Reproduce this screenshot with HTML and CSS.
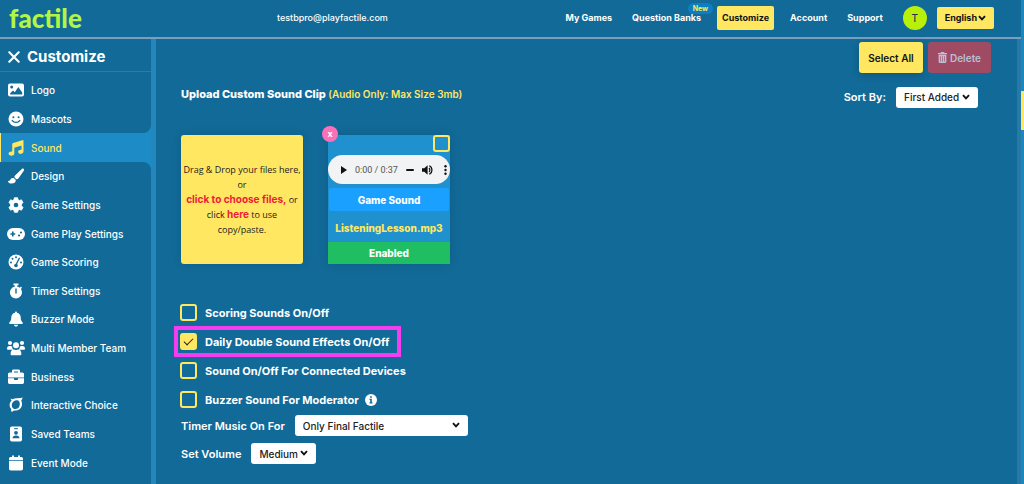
FILE: index.html
```html
<!DOCTYPE html>
<html lang="en">
<head>
<meta charset="utf-8">
<meta name="viewport" content="width=device-width, initial-scale=1">
<title>Factile – Customize Sound</title>
<link rel="stylesheet" href="styles.css">
</head>
<body>
<svg class="defs" aria-hidden="true">
  <symbol id="chevron" viewBox="0 0 8 6"><path d="M1 1.2 4 4.3 7 1.2" fill="none" stroke="currentColor" stroke-width="1.9"/></symbol>
</svg>
<div class="page">
  <div class="app">
    <header class="topbar">
      <a class="brand" href="#">factile</a>
      <span class="email">testbpro@playfactile.com</span>
      <nav class="topnav">
        <a href="#">My Games</a>
        <a class="banks" href="#">Question Banks<span class="new">New</span></a>
        <a class="current" href="#">Customize</a>
        <a href="#">Account</a>
        <a href="#">Support</a>
      </nav>
      <button class="avatar" type="button">T</button>
      <button class="language" type="button">English<svg class="chevron"><use href="#chevron"/></svg></button>
    </header>
    <div class="body">
      <aside class="sidebar">
        <div class="side-head">
          <button class="close" type="button" aria-label="Close menu"><svg viewBox="0 0 12 12"><path d="M1.3 1.3 10.7 10.7M10.7 1.3 1.3 10.7" stroke="currentColor" stroke-width="2.1" stroke-linecap="round"/></svg></button>
          <h1>Customize</h1>
        </div>
        <ul class="menu">
          <li><a href="#"><svg viewBox="0 0 18 16"><rect x="1" y="1.5" width="16" height="13" rx="2"/><circle class="cut" cx="4.7" cy="5" r="1.5"/><path class="cut" d="M3.2 12.5v-1.3L6 8.5l1.8 1.7L11.3 5l3.9 5.5v2z"/></svg>Logo</a></li>
          <li class="before"><a href="#"><svg viewBox="0 0 18 16"><circle cx="9" cy="8" r="7.5"/><circle class="cut" cx="6.4" cy="6.3" r="1"/><circle class="cut" cx="11.6" cy="6.3" r="1"/><path class="cut-line" d="M5.3 9.6c1.8 2.4 5.6 2.4 7.4 0"/></svg>Mascots</a></li>
          <li class="active"><a href="#" aria-current="page"><svg viewBox="0 0 18 16"><path d="M16.5.7v10.9c0 1.3-1.3 2.3-2.8 2.3s-2.6-.9-2.6-2.1 1.2-2.1 2.7-2.1l.7.1V5.5L7.3 7.7v5.7c0 1.300-1.300 2.300-2.900 2.300S1.500 14.800 1.500 13.600s1.300-2.200 2.900-2.200l.8.1V4.200c0-.6.3-1 .9-1.200L15.300.2c.7-.2 1.200 0 1.200.5z"/></svg>Sound</a></li>
          <li class="after"><a href="#"><svg viewBox="0 0 18 16"><path d="M16.500.7c1 .8.500 1.600.1 2.300l-5 7.300c-.6.800-1.400 1.100-2.200.9L7.600 9.600c-.3-.9 0-1.600.7-2.300L14.800.9c.5-.5 1.100-.6 1.700-.2zM6.700 10.100l2.100 1.900c.2 2.300-1.900 3.600-4.100 3.600C2.300 15.600.9 14.500 1 12.700c1.200.7 1.800.1 2.300-.9.700-1.400 1.900-2 3.400-1.700z"/></svg>Design</a></li>
          <li><a href="#"><svg viewBox="0 0 18 16"><path d="M7.400.700h3.200l.5 2.100 1.300.7 2-.7 1.700 2.800-1.600 1.500v1.800l1.600 1.500-1.700 2.800-2-.7-1.300.7-.5 2.100H7.400l-.5-2.100-1.300-.7-2 .7-1.700-2.800 1.600-1.500V7.100L1.900 5.600l1.700-2.800 2 .7 1.300-.7z" stroke="#fff" stroke-width=".8" stroke-linejoin="round"/><circle class="cut" cx="9" cy="8" r="2.300"/></svg>Game Settings</a></li>
          <li><a href="#"><svg viewBox="0 0 18 16"><rect x="0" y="2" width="18" height="12" rx="6"/><path class="cut" d="M5 5.600h1.600v1.600h1.600v1.600H6.600v1.600H5V8.800H3.400V7.200H5z"/><circle class="cut" cx="12" cy="9.500" r="1.100"/><circle class="cut" cx="14" cy="6.500" r="1.100"/></svg>Game Play Settings</a></li>
          <li><a href="#"><svg viewBox="0 0 18 16"><circle cx="9" cy="8" r="7.500"/><circle class="cut" cx="4" cy="8.500" r="1"/><circle class="cut" cx="5.500" cy="4.800" r="1"/><circle class="cut" cx="9" cy="3.300" r="1"/><circle class="cut" cx="14" cy="8.500" r="1"/><path class="cut-line" d="M12.300 4.300 9.400 10"/><circle class="cut" cx="9" cy="11.500" r="1.800"/></svg>Game Scoring</a></li>
          <li><a href="#"><svg viewBox="0 0 18 16"><path d="M6.500.5h5v1.800h-1.300v1.300c1 .2 1.900.6 2.600 1.200L14 3.600 15 4.800l-1.100 1.300a6 6 0 1 1-6.100-2.500V2.300H6.500z"/><path class="cut-line" d="M9 6v4"/></svg>Timer Settings</a></li>
          <li><a href="#"><svg viewBox="0 0 18 16"><path d="M9 .5c.7 0 1 .4 1 1.200 2.400.5 3.700 2.300 3.700 4.600 0 3 .8 4 1.900 5.100.6.700.2 1.600-.7 1.600H3.100c-.9 0-1.300-.9-.7-1.600C3.500 10.300 4.300 9.300 4.300 6.300c0-2.300 1.300-4.100 3.700-4.600 0-.8.3-1.200 1-1.200zM7 13.700h4c0 2.400-4 2.400-4 0z"/></svg>Buzzer Mode</a></li>
          <li><a href="#"><svg viewBox="0 0 18 16"><circle cx="3" cy="3" r="2.100"/><circle cx="15" cy="3" r="2.100"/><circle cx="9" cy="5.300" r="3"/><path d="M0 8.500C0 6.700 1 5.900 2.300 5.900h1.500c.6 0 1 .2 1.400.5-.1 1.300.3 2.400 1.100 3.300H.8c-.5 0-.8-.400-.8-1.200zM18 8.500c0-1.800-1-2.600-2.300-2.600h-1.500c-.6 0-1 .2-1.400.5.1 1.300-.3 2.400-1.100 3.300h5.500c.5 0 .8-.4.8-1.200zM3.600 13.900c0-3 1.400-4.400 3.400-4.400 1.300.6 2.700.6 4 0 2 0 3.400 1.400 3.400 4.400 0 .9-.6 1.400-1.400 1.400H5c-.8 0-1.400-.5-1.400-1.400z"/></svg>Multi Member Team</a></li>
          <li><a href="#"><svg viewBox="0 0 18 16"><path d="M5 3.500V2c0-.8.600-1.400 1.400-1.400h5.200c.8 0 1.400.6 1.400 1.400v1.500h2.200c1 0 1.800.8 1.800 1.800V8.500H1V5.300c0-1 .8-1.800 1.800-1.800zm2 0h4v-1H7zM1 9.300h6v.9c0 .5.300.8.800.8h2.400c.5 0 .8-.3.800-.8v-.9h6v3.900c0 1-.8 1.800-1.800 1.800H2.800c-1 0-1.800-.8-1.800-1.800z"/></svg>Business</a></li>
          <li><a href="#"><svg viewBox="0 0 18 16"><path d="M3.700 1.300c.9 1 1.900 1.100 3.200.5 2.300-.8 4.900-.6 6.800-.8.900-.1 1.400-.3 1.700-.8.100 1.500-.3 2.500-1.200 3.200 2.300 4.800-.3 10-5.400 10-1.700 0-2.900.1-3.700 1.500-.9-.4-1.300-1.300-.8-2.900C1.900 9.400 2.200 5.900 4.600 3.500c-.6-.6-.9-1.300-.9-2.200zM6.800 4.200C4.300 6 4.200 9.800 6.300 11.400c2.100 1.300 4.800.3 5.900-1.700 1.100-2.200.7-4.700-.7-5.900-1.300-.7-3.300-.6-4.700.4z" fill-rule="evenodd"/></svg>Interactive Choice</a></li>
          <li><a href="#"><svg viewBox="0 0 18 16"><rect x="3" y=".5" width="12" height="15" rx="1.800"/><path class="cut" d="M7 2.200h4v1H7z"/><circle class="cut" cx="9" cy="6.800" r="1.900"/><path class="cut" d="M5.600 12.300c0-2 1.100-2.900 3.400-2.900s3.400.9 3.400 2.900z"/></svg>Saved Teams</a></li>
          <li><a href="#"><svg viewBox="0 0 18 16"><path d="M3.800 2H5V.500h2V2h4V.500h2V2h1.200C15.200 2 16 2.700 16 3.700V5H2V3.700C2 2.700 2.800 2 3.800 2zM2 5.800h14v8c0 1-.8 1.700-1.800 1.700H3.800c-1 0-1.800-.7-1.800-1.700z"/></svg>Event Mode</a></li>
        </ul>
      </aside>
      <main class="content">
        <div class="actions">
          <button class="select-all" type="button">Select All</button>
          <button class="delete" type="button" disabled><svg viewBox="0 0 10 12"><path fill="currentColor" fill-rule="evenodd" d="M3.300 0h3.400l.5.900H10v1.500H0V.9h2.800zM.7 3h8.600v7.800c0 .7-.5 1.200-1.200 1.200H1.900c-.7 0-1.200-.5-1.200-1.200zM2.600 4.500v6h.7v-6zm2.100 0v6h.7v-6zm2.100 0v6h.7v-6z"/></svg>Delete</button>
        </div>
        <div class="title-row">
          <h2>Upload Custom Sound Clip <small>(Audio Only: Max Size 3mb)</small></h2>
          <div class="sort">
            <label for="sort">Sort By:</label>
            <span class="select"><select id="sort"><option>First Added</option></select><svg class="chevron"><use href="#chevron"/></svg></span>
          </div>
        </div>
        <div class="cards">
          <div class="drop">
            <p>Drag &amp; Drop your files here,<br>or<br><a href="#">click to choose files,</a> or<br>click <a href="#">here</a> to use<br>copy/paste.</p>
          </div>
          <div class="clip">
            <button class="remove" type="button" aria-label="Remove clip">x</button>
            <div class="clip-top"><input class="check" type="checkbox" aria-label="Select ListeningLesson.mp3"></div>
            <div class="player">
              <button type="button" aria-label="Play"><svg class="i-play" viewBox="0 0 6 8"><path d="M0 0 6 4 0 8z"/></svg></button>
              <span class="time">0:00 / 0:37</span>
              <span class="seek"></span>
              <button type="button" aria-label="Mute"><svg class="i-vol" viewBox="0 0 11 10"><path d="M0 3.300h2.300L5.600.300v9.400L2.300 6.700H0z"/><path d="M7 3c1.100 1 1.100 3 0 4M7.300.8c3.500 1.500 3.500 6.900 0 8.400" fill="none" stroke="#111" stroke-width="1.200"/></svg></button>
              <button class="more" type="button" aria-label="More options"><svg class="i-more" viewBox="0 0 3 10"><circle cx="1.500" cy="1.300" r="1.200"/><circle cx="1.500" cy="5" r="1.200"/><circle cx="1.500" cy="8.700" r="1.200"/></svg></button>
            </div>
            <button class="kind" type="button">Game Sound</button>
            <div class="file">ListeningLesson.mp3</div>
            <button class="enabled" type="button">Enabled</button>
          </div>
        </div>
        <div class="options">
          <label class="option"><input class="check" type="checkbox">Scoring Sounds On/Off</label>
          <label class="option marked"><input class="check" type="checkbox" checked>Daily Double Sound Effects On/Off</label>
          <label class="option"><input class="check" type="checkbox">Sound On/Off For Connected Devices</label>
          <label class="option"><input class="check" type="checkbox">Buzzer Sound For Moderator<svg class="info" viewBox="0 0 12 12"><circle cx="6" cy="6" r="6" fill="#fff"/><path fill="#126a98" d="M5.100 2.300h1.700v1.500H5.100zM4.500 4.800h2.300v3.400h.7v1.200h-3V8.200h.7V6h-.7z"/></svg></label>
        </div>
        <div class="field">
          <label for="timer">Timer Music On For</label>
          <span class="select wide"><select id="timer"><option>Only Final Factile</option></select><svg class="chevron"><use href="#chevron"/></svg></span>
        </div>
        <div class="field volume">
          <label for="volume">Set Volume</label>
          <span class="select"><select id="volume"><option>Medium</option></select><svg class="chevron"><use href="#chevron"/></svg></span>
        </div>
      </main>
      <div class="inner-track"></div>
    </div>
  </div>
  <div class="page-track"><div class="thumb"></div></div>
</div>
</body>
</html>
```
FILE: styles.css
```css
:root {
  --bg: #126a98;
  --stripe: #2386bc;
  --yellow: #ffe761;
}
* { box-sizing: border-box; }
body {
  margin: 0;
  background: var(--bg);
  color: #fff;
  font: 600 11px/16px Inter, "Open Sans", sans-serif;
}
a { color: inherit; text-decoration: none; }
button, select, input { margin: 0; border: 0; padding: 0; font: inherit; color: inherit; }
button { background: none; }
h1, h2, p, ul { margin: 0; padding: 0; }
.defs { position: absolute; width: 0; height: 0; }
.page { display: flex; min-height: 100vh; }
.app { flex: 1; display: flex; flex-direction: column; min-width: 0; }
.page-track { width: 3px; padding-top: 91px; background: #1c86c0; }
.thumb { height: 39px; background: var(--yellow); }

.topbar {
  display: flex;
  align-items: center;
  height: 39px;
  padding: 0 27px 1px 9px;
  border-bottom: 2px solid #7c9dbd;
  font-weight: 700;
  font-size: 9px;
}
.brand { font: 900 26px/34px Lato, sans-serif; color: #b2f545; width: 268px; }
.email { font-weight: 500; }
.topnav { display: flex; align-items: center; gap: 20px; margin-left: auto; }
.banks { position: relative; }
.new {
  position: absolute;
  top: -7px;
  right: -12px;
  padding: 0 5px;
  border-radius: 6px;
  background: #0c7fc2;
  color: var(--yellow);
  font-size: 7px;
  line-height: 11px;
}
.current, .language {
  background: var(--yellow);
  color: #111;
  border-radius: 2px;
}
.current { padding: 4px 5px; margin: 0 -4px; }
.avatar {
  width: 24px;
  height: 24px;
  margin: 0 10px 0 20px;
  border-radius: 50%;
  background: #b8f00c;
  color: #234;
  font-size: 10px;
  font-weight: 500;
}
.language { display: flex; align-items: center; gap: 1px; padding: 3px 8px; }
.chevron { width: 8px; height: 6px; }

.body { flex: 1; display: flex; }
.sidebar { flex: none; display: flex; flex-direction: column; width: 156px; border-right: 5px solid var(--stripe); }
.side-head { display: flex; align-items: center; gap: 7px; height: 33px; padding: 3px 8px 0; border-bottom: 1px solid #1d7fb3; }
.side-head h1 { font-size: 15px; font-weight: 700; line-height: 20px; }
.close svg { display: block; width: 12px; height: 12px; }
.menu { flex: 1; display: flex; flex-direction: column; padding: 4px 0 7px; list-style: none; }
.menu li { flex: 1; display: flex; }
.menu a { flex: 1; display: flex; align-items: center; gap: 6px; padding-left: 7px; background: var(--bg); font-size: 10px; font-weight: 500; }
.menu svg { width: 18px; height: 16px; fill: #fff; }
.menu .cut { fill: var(--bg); }
.menu .cut-line { fill: none; stroke: var(--bg); stroke-width: 1.4; stroke-linecap: round; }
.menu .before, .menu .after { background: #1d8bc6; }
.menu .before a { border-bottom-right-radius: 8px; }
.menu .after a { border-top-right-radius: 8px; }
.menu .active a { background: #1d8bc6; border-left: 1px solid var(--yellow); padding-left: 6px; color: var(--yellow); }
.menu .active svg { fill: var(--yellow); }

.content { flex: 1; min-width: 0; padding: 3px 26px 16px 25px; }
.inner-track { width: 4px; background: #277aa8; }
.actions { display: flex; justify-content: flex-end; gap: 5px; }
.actions button { display: flex; align-items: center; justify-content: center; gap: 3px; height: 31px; border-radius: 3px; font-size: 10px; }
.actions .select-all { width: 64px; background: var(--yellow); color: #111; box-shadow: 0 2px 8px #0003; }
.actions .delete { width: 63px; background: #a04b64; color: #b9bfd5; }
.delete svg { width: 9px; height: 11px; }
.title-row { display: flex; align-items: center; justify-content: space-between; margin: 13px 13px 0 0; }
h2 { padding-bottom: 6px; font-size: 11px; font-weight: 800; }
h2 small { font-size: 10px; font-weight: 600; color: var(--yellow); }
.sort { display: flex; align-items: center; gap: 10px; }
.select { position: relative; display: inline-flex; }
.select select {
  appearance: none;
  height: 21px;
  padding: 0 18px 0 8px;
  border-radius: 3px;
  background: #fff;
  color: #222;
  font-size: 10px;
  font-weight: 500;
}
.select .chevron { position: absolute; right: 8px; top: 7px; color: #111; pointer-events: none; }
.select.wide select { width: 173px; }

.cards { display: flex; gap: 25px; margin-top: 27px; }
.drop, .clip { width: 122px; height: 129px; }
.drop {
  display: flex;
  align-items: center;
  justify-content: center;
  border-radius: 3px;
  background: var(--yellow);
  color: #222;
  text-align: center;
  font: 500 9px/15px "Open Sans", sans-serif;
  white-space: nowrap;
  box-shadow: 0 0 10px #0002;
}
.drop a { color: #ee1c36; font-family: Inter, sans-serif; font-size: 10px; font-weight: 700; }
.clip { position: relative; display: flex; flex-direction: column; background: #1f91cf; text-align: center; box-shadow: 0 0 10px #0002; }
.remove {
  position: absolute;
  left: -6px;
  top: -9px;
  width: 16px;
  height: 16px;
  border-radius: 50%;
  background: #fb70b7;
  font-size: 9px;
  line-height: 14px;
  font-weight: 700;
}
.clip-top { display: flex; justify-content: flex-end; height: 20px; }
.check {
  appearance: none;
  flex: none;
  display: grid;
  place-items: center;
  width: 17px;
  height: 17px;
  border: 2px solid var(--yellow);
  border-radius: 3px;
}
.check:checked { background: var(--yellow); }
.check:checked::before {
  content: "";
  width: 8px;
  height: 4px;
  margin-bottom: 3px;
  border: solid #222;
  border-width: 0 0 1px 1px;
  rotate: -45deg;
}
.player {
  display: flex;
  align-items: center;
  gap: 8px;
  height: 29px;
  padding: 0 3px 0 13px;
  border-radius: 15px;
  background: #f1f3f4;
}
.player .more { margin-left: auto; }
.player svg { display: block; fill: #111; }
.i-play { width: 6px; height: 8px; }
.i-vol { width: 11px; height: 10px; }
.i-more { width: 3px; height: 10px; }
.time { color: #555; font: 400 9px/12px Roboto, sans-serif; }
.seek { width: 8px; height: 2px; border-radius: 1px; background: #111; }
.kind { height: 23px; margin: 4px 1px 0; border-radius: 2px; background: #1aa0ff; font-size: 10px; font-weight: 800; }
.file { flex: 1; padding-top: 9px; color: var(--yellow); font-size: 10px; font-weight: 800; line-height: 16px; }
.enabled { height: 22px; background: #1fbe62; font-size: 10px; font-weight: 800; }

.options { display: flex; flex-direction: column; align-items: flex-start; margin-top: 34px; font-weight: 700; }
.option { display: flex; align-items: center; gap: 8px; height: 29px; margin-left: -1px; }
.option.marked { height: 31px; margin: -1px 0 -1px -7px; padding: 0 8px 0 2px; border: 4px solid #f43df0; }
.info { width: 12px; height: 12px; margin-left: -2px; }
.field { display: flex; align-items: center; gap: 10px; margin-top: 1px; }
.volume { margin-top: 7px; }
```
